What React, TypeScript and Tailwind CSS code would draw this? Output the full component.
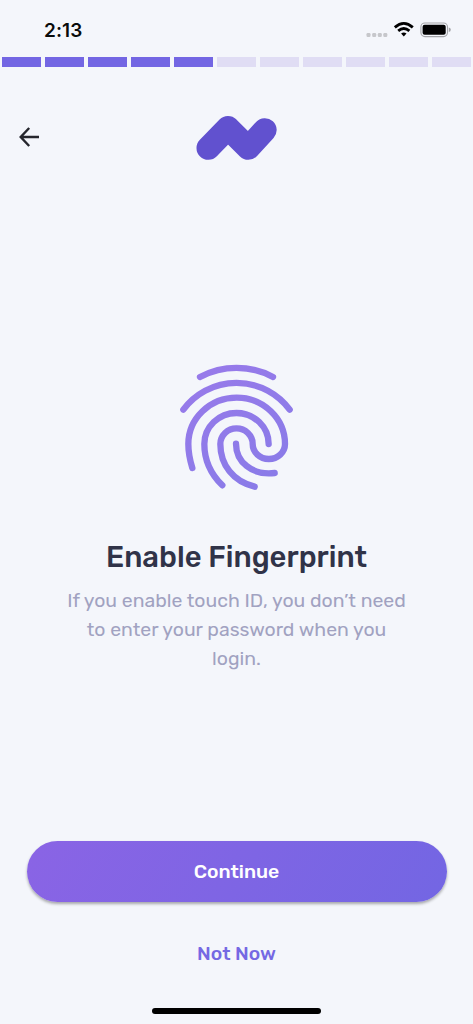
import React from "react";

const steps = Array.from({ length: 11 }, (_, i) => i < 5);

function StatusBar() {
  return (
    <div className="flex h-[57px] shrink-0 items-start justify-between pl-[44px] pr-[22px]">
      <span className="mt-[17px] font-['Inter'] text-[19px] leading-[28px] font-semibold tracking-[0.1px] text-[#090b0b]">2:13</span>
      <svg className="mt-[20px]" width="85" height="20" viewBox="0 0 85 20">
        <g fill="#c6c7cb">
          <rect x="0.5" y="13" width="4" height="4" rx="1.2" />
          <rect x="6.2" y="13" width="4" height="4" rx="1.2" />
          <rect x="11.8" y="13" width="4" height="4" rx="1.2" />
          <rect x="17.3" y="13" width="4" height="4" rx="1.2" />
        </g>
        <g fill="none" stroke="#000" strokeWidth="2.8">
          <path d="M28.8 7.4Q37.8 -0.6 46.8 7.4" />
          <path d="M32.2 10.9Q37.8 6.1 43.4 10.9" />
        </g>
        <path d="M35.1 13.6Q37.8 11.6 40.5 13.6L37.8 16.6Z" fill="#000" />
        <rect x="54.9" y="3" width="26.6" height="13.6" rx="4" fill="none" stroke="#a3a4a8" strokeWidth="1.1" />
        <rect x="56.6" y="4.8" width="23.1" height="10" rx="2" fill="#000" />
        <path d="M82.8 7.6Q84.8 8 84.8 9.8Q84.8 11.6 82.8 12Z" fill="#a3a4a8" />
      </svg>
    </div>
  );
}

function Fingerprint() {
  return (
    <svg className="ml-[1px]" width="135" height="145" viewBox="0 0 405 435" fill="none" stroke="url(#print)" strokeWidth="19" strokeLinecap="round">
      <defs>
        <linearGradient id="print" gradientUnits="userSpaceOnUse" x1="60" y1="40" x2="300" y2="400">
          <stop stopColor="#987aea" />
          <stop offset="1" stopColor="#897be8" />
        </linearGradient>
      </defs>
      <path d="M90 66A233 233 0 0 1 309 66" />
      <path d="M40 164A198.5 198.5 0 0 1 359 164" />
      <path d="M67 339C58 310 55 290 55 267A145 139 0 0 1 345 267A48.5 45 0 0 1 248 267A48.5 47 0 0 0 151 267C151 330 190 380 254 395" />
      <path d="M157 391C120 355 103 315 103 267A96.5 93 0 0 1 296 267" />
      <path d="M198 266C198 320 245 362 314 354" />
    </svg>
  );
}

export default function App() {
  return (
    <main className="flex h-[1024px] w-full flex-col overflow-hidden bg-[#f4f6fb] font-['Rubik','Roboto',sans-serif]">
      <StatusBar />
      <div className="flex h-[10px] shrink-0 gap-[4px] px-[2.3px]">
        {steps.map((done, i) => (
          <div key={i} className={done ? "flex-1 bg-[#7366e3]" : "flex-1 bg-[#e0ddf4]"} />
        ))}
      </div>
      <header className="mt-[33px] grid h-[75px] shrink-0 grid-cols-[180px_120px_1fr]">
        <button aria-label="Back" className="ml-[18px] mt-[25px] h-6 w-6">
          <svg width="24" height="24" viewBox="0 0 24 24" fill="none" stroke="#25262d" strokeWidth="2.4">
            <path d="M21 12H3M11.2 3L2.7 12L11.2 21" />
          </svg>
        </button>
        <svg width="120" height="75" viewBox="0 0 360 225" fill="none" stroke="#6151cf" strokeWidth="71" strokeLinecap="round" strokeLinejoin="round">
          <path d="M85 144L144 83.5L205 144L254.5 90" />
        </svg>
      </header>
      <section className="mt-[180px] flex flex-col items-center text-center">
        <Fingerprint />
        <h1 className="mt-[38px] text-[29.2px] leading-[38px] font-medium whitespace-nowrap text-[#303348]">Enable Fingerprint</h1>
        <div className="mt-[10px] flex flex-col items-center text-[19.45px] leading-[29px] whitespace-nowrap text-[#a1a2c1]">
          <span>If you enable touch ID, you don’t need</span>
          <span>to enter your password when you</span>
          <span>login.</span>
        </div>
      </section>
      <footer className="mt-auto flex flex-col items-center">
        <button className="h-[61px] w-[420px] rounded-full bg-linear-[120deg,#8a64e5,#7366e3] pt-px text-[19.45px] font-medium text-white shadow-[0_2px_3px_rgba(0,0,0,0.32)]">Continue</button>
        <button className="mt-[37px] h-[30px] text-[19.45px] leading-[30px] font-medium text-[#7568e3]">Not Now</button>
        <div className="mt-[39px] mb-[10px] h-[6px] w-[169px] rounded-full bg-black" />
      </footer>
    </main>
  );
}
